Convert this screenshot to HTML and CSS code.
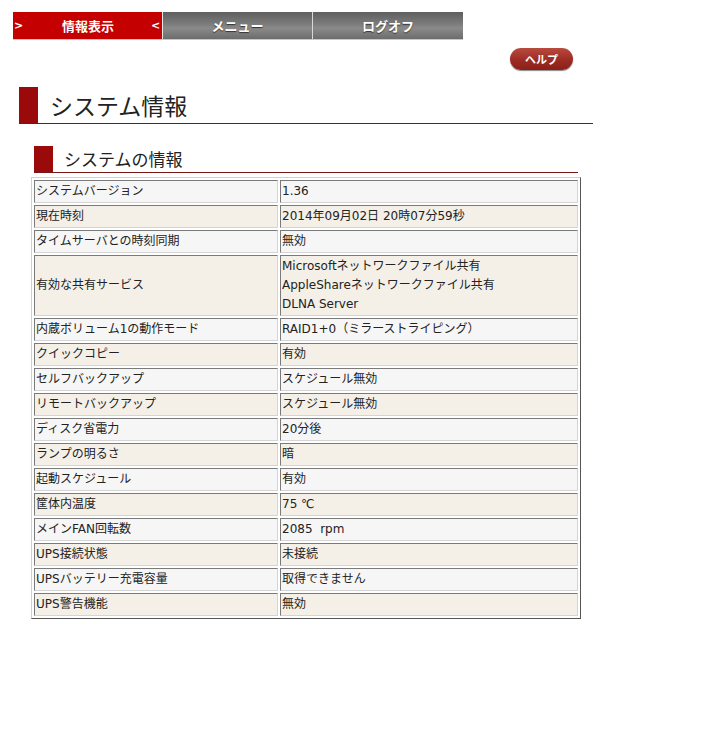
FILE: index.html
```html
<!DOCTYPE html>
<html lang="ja">
<head>
<meta charset="utf-8">
<title>システム情報</title>
<link rel="stylesheet" href="styles.css">
</head>
<body>
<nav class="nav">
  <a class="tab tab-active"><span class="chev">&gt;</span><span class="tab-label tab-label-active">情報表示</span><span class="chev">&lt;</span></a>
  <a class="tab tab-gray"><span class="tab-label">メニュー</span></a>
  <a class="tab tab-gray tab-last"><span class="tab-label">ログオフ</span></a>
</nav>
<main class="main">
  <div class="help-row"><a class="help-btn">ヘルプ</a></div>
  <h1 class="title"><span class="title-mark"></span><span class="title-text">システム情報</span></h1>
  <section class="section">
    <h2 class="subtitle"><span class="sub-mark"></span><span class="sub-text">システムの情報</span></h2>
    <table class="info">
      <tr class="odd"><td class="k">システムバージョン</td><td class="v">1.36</td></tr>
      <tr class="even"><td class="k">現在時刻</td><td class="v">2014年09月02日 20時07分59秒</td></tr>
      <tr class="odd"><td class="k">タイムサーバとの時刻同期</td><td class="v">無効</td></tr>
      <tr class="even"><td class="k">有効な共有サービス</td><td class="v">Microsoftネットワークファイル共有<br>AppleShareネットワークファイル共有<br>DLNA Server</td></tr>
      <tr class="odd"><td class="k">内蔵ボリューム1の動作モード</td><td class="v">RAID1+0（ミラーストライピング）</td></tr>
      <tr class="even"><td class="k">クイックコピー</td><td class="v">有効</td></tr>
      <tr class="odd"><td class="k">セルフバックアップ</td><td class="v">スケジュール無効</td></tr>
      <tr class="even"><td class="k">リモートバックアップ</td><td class="v">スケジュール無効</td></tr>
      <tr class="odd"><td class="k">ディスク省電力</td><td class="v">20分後</td></tr>
      <tr class="even"><td class="k">ランプの明るさ</td><td class="v">暗</td></tr>
      <tr class="odd"><td class="k">起動スケジュール</td><td class="v">有効</td></tr>
      <tr class="even"><td class="k">筐体内温度</td><td class="v">75 ℃</td></tr>
      <tr class="odd"><td class="k">メインFAN回転数</td><td class="v">2085&nbsp; rpm</td></tr>
      <tr class="even"><td class="k">UPS接続状態</td><td class="v">未接続</td></tr>
      <tr class="odd"><td class="k">UPSバッテリー充電容量</td><td class="v">取得できません</td></tr>
      <tr class="even"><td class="k">UPS警告機能</td><td class="v">無効</td></tr>
    </table>
  </section>
</main>
</body>
</html>
```

FILE: styles.css
```css
html, body {
  margin: 0;
  padding: 0;
  background: #ffffff;
}
body {
  font-family: "DejaVu Sans", "Noto Sans CJK JP", sans-serif;
  font-size: 12px;
  color: #222;
  padding: 12px 0 0 13px;
}
.nav {
  display: flex;
  width: 450px;
  height: 27px;
  border-bottom: 1px solid #c8c8c8;
}
.tab {
  width: 150px;
  height: 27px;
  box-sizing: border-box;
  display: flex;
  align-items: center;
  justify-content: center;
  color: #fff;
  font-family: "Noto Sans CJK JP", sans-serif;
  font-weight: bold;
  font-size: 13px;
  text-decoration: none;
}
.tab-active {
  background: #c40000;
  justify-content: space-between;
  padding: 0 3px 0 1px;
  border-right: 1px solid #e8e8e8;
}
.tab-label-active {
  margin-left: 3px;
}
.chev {
  font-family: "DejaVu Sans", sans-serif;
  font-weight: bold;
  font-size: 11px;
  width: 8px;
  text-align: center;
}
.tab-gray {
  background: linear-gradient(#5e5e5e 0%, #7c7c7c 45%, #8a8a8a 60%, #6c6c6c 100%);
  text-shadow: 0 1px 1px #333;
  border-right: 1px solid #d8d8d8;
}
.tab-last {
  border-right: none;
}
.main {
  width: 574px;
  margin-left: 6px;
}
.help-row {
  display: flex;
  justify-content: flex-end;
  padding: 8px 20px 0 0;
}
.help-btn {
  width: 63px;
  height: 22px;
  border-radius: 11px;
  background: linear-gradient(#b94a3e, #9a2a22 60%, #8a2019);
  color: #fff;
  font-family: "Noto Sans CJK JP", sans-serif;
  font-weight: bold;
  font-size: 11px;
  display: flex;
  align-items: center;
  justify-content: center;
  box-shadow: 0 1px 1px #888;
}
.title {
  margin: 17px 0 0 0;
  display: flex;
  align-items: center;
  height: 36px;
  border-bottom: 1px solid #7a1515;
  font-weight: normal;
}
.title-mark {
  width: 19px;
  height: 36px;
  background: #9b0a0a;
  flex: none;
}
.title-text {
  font-family: "Noto Sans CJK JP", sans-serif;
  font-size: 23px;
  color: #222;
  padding-left: 12px;
  line-height: 36px;
}
.section {
  margin: 22px 0 0 12px;
}
.subtitle {
  margin: 0 0 4px 3px;
  width: 544px;
  display: flex;
  align-items: center;
  height: 26px;
  border-bottom: 1px solid #7a1515;
  font-weight: normal;
}
.sub-mark {
  width: 19px;
  height: 26px;
  background: #9b0a0a;
  flex: none;
}
.sub-text {
  font-family: "Noto Sans CJK JP", sans-serif;
  font-size: 17px;
  color: #222;
  padding-left: 11px;
  line-height: 26px;
}
.info {
  width: 550px;
  border-collapse: separate;
  border-spacing: 2px;
  border: 1px solid;
  border-color: #d0d0d0 #555 #555 #d0d0d0;
  table-layout: fixed;
}
.info td {
  border: 1px solid;
  border-color: #7a7a7a #d4d4d4 #d4d4d4 #7a7a7a;
  padding: 1px 1px;
  line-height: 19px;
  vertical-align: middle;
  color: #222;
}
.info td.k {
  width: 240px;
}
.odd td {
  background: #f6f6f6;
}
.even td {
  background: #f4f0e8;
}
```
